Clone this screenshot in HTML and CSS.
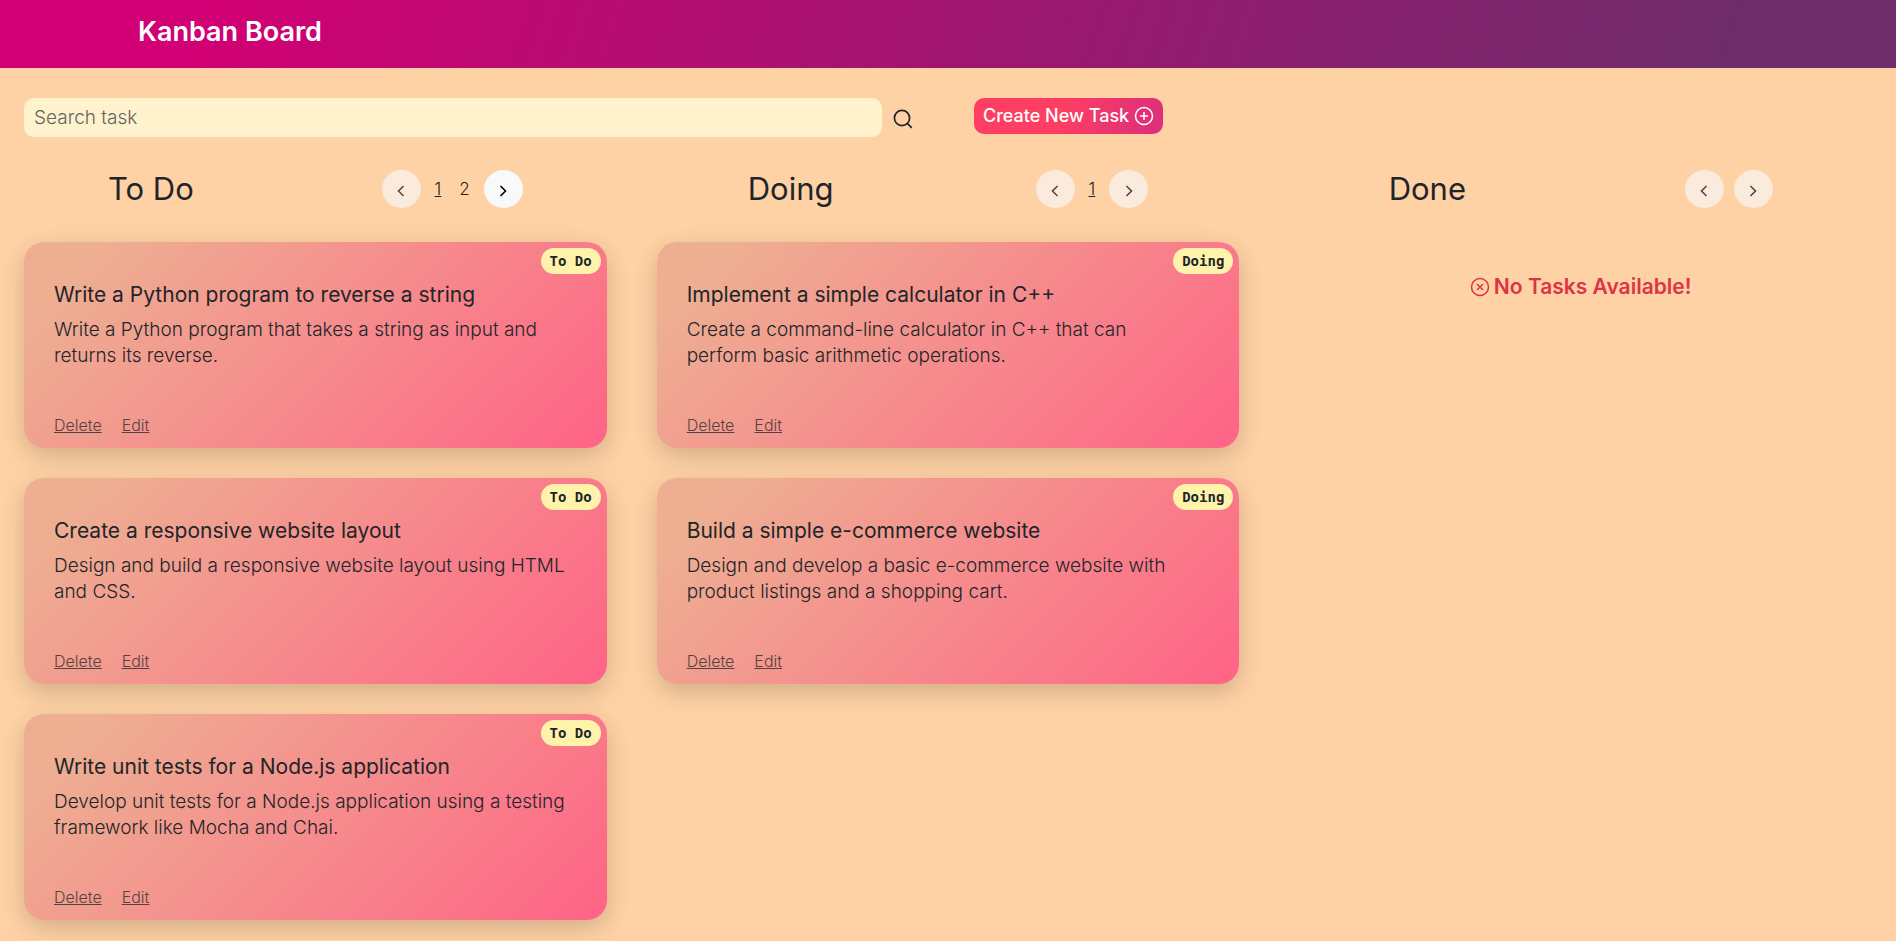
FILE: index.html
```html
<!DOCTYPE html>
<html lang="en">
<head>
<meta charset="utf-8">
<meta name="viewport" content="width=device-width, initial-scale=1">
<title>Kanban Board</title>
<link rel="stylesheet" href="styles.css">
</head>
<body>
<svg class="sprite" aria-hidden="true">
  <symbol id="left" viewBox="0 0 18 18"><path d="M11.500 4 6.500 9l5 5" fill="none" stroke="currentColor" stroke-width="1.600"/></symbol>
  <symbol id="right" viewBox="0 0 18 18"><path d="m6.500 4 5 5-5 5" fill="none" stroke="currentColor" stroke-width="1.600"/></symbol>
</svg>
<header class="navbar"><h1 class="brand">Kanban Board</h1></header>
<main>
  <div class="toolbar">
    <form class="search">
      <input class="search-input" type="text" placeholder="Search task" aria-label="Search task">
      <button class="search-button" type="button" aria-label="Search">
        <svg class="search-icon" viewBox="0 0 20 20" fill="none" stroke="currentColor" stroke-width="1.7"><circle cx="9" cy="9" r="7.600"/><path d="m14.300 14.300 4.500 4.500"/></svg>
      </button>
    </form>
    <div class="actions">
      <button class="create" type="button">Create New Task
        <svg class="create-icon" viewBox="0 0 20 20" fill="none" stroke="currentColor" stroke-width="1.5"><circle cx="10" cy="10" r="8.500"/><path d="M10 6v8M6 10h8"/></svg>
      </button>
    </div>
  </div>
  <div class="board">
    <section class="column">
      <div class="column-head">
        <h2 class="column-title">To Do</h2>
        <nav class="pager" aria-label="To Do pages">
          <button class="page-button" type="button" aria-label="Previous" disabled><svg class="chevron"><use href="#left"/></svg></button>
          <a class="page current" href="#">1</a>
          <a class="page" href="#">2</a>
          <button class="page-button" type="button" aria-label="Next"><svg class="chevron"><use href="#right"/></svg></button>
        </nav>
      </div>
      <article class="card">
        <span class="badge">To Do</span>
        <h3 class="card-title">Write a Python program to reverse a string</h3>
        <p class="card-text">Write a Python program that takes a string as input and<br>returns its reverse.</p>
        <div class="card-links"><a href="#">Delete</a><a href="#">Edit</a></div>
      </article>
      <article class="card">
        <span class="badge">To Do</span>
        <h3 class="card-title">Create a responsive website layout</h3>
        <p class="card-text">Design and build a responsive website layout using HTML<br>and CSS.</p>
        <div class="card-links"><a href="#">Delete</a><a href="#">Edit</a></div>
      </article>
      <article class="card">
        <span class="badge">To Do</span>
        <h3 class="card-title">Write unit tests for a Node.js application</h3>
        <p class="card-text">Develop unit tests for a Node.js application using a testing<br>framework like Mocha and Chai.</p>
        <div class="card-links"><a href="#">Delete</a><a href="#">Edit</a></div>
      </article>
    </section>
    <section class="column">
      <div class="column-head">
        <h2 class="column-title">Doing</h2>
        <nav class="pager" aria-label="Doing pages">
          <button class="page-button" type="button" aria-label="Previous" disabled><svg class="chevron"><use href="#left"/></svg></button>
          <a class="page current" href="#">1</a>
          <button class="page-button" type="button" aria-label="Next" disabled><svg class="chevron"><use href="#right"/></svg></button>
        </nav>
      </div>
      <article class="card">
        <span class="badge">Doing</span>
        <h3 class="card-title">Implement a simple calculator in C++</h3>
        <p class="card-text">Create a command-line calculator in C++ that can<br>perform basic arithmetic operations.</p>
        <div class="card-links"><a href="#">Delete</a><a href="#">Edit</a></div>
      </article>
      <article class="card">
        <span class="badge">Doing</span>
        <h3 class="card-title">Build a simple e-commerce website</h3>
        <p class="card-text">Design and develop a basic e-commerce website with<br>product listings and a shopping cart.</p>
        <div class="card-links"><a href="#">Delete</a><a href="#">Edit</a></div>
      </article>
    </section>
    <section class="column">
      <div class="column-head">
        <h2 class="column-title">Done</h2>
        <nav class="pager" aria-label="Done pages">
          <button class="page-button" type="button" aria-label="Previous" disabled><svg class="chevron"><use href="#left"/></svg></button>
          <button class="page-button" type="button" aria-label="Next" disabled><svg class="chevron"><use href="#right"/></svg></button>
        </nav>
      </div>
      <p class="empty">
        <svg class="empty-icon" viewBox="0 0 20 20" fill="none" stroke="currentColor" stroke-width="1.500"><circle cx="10" cy="10" r="8.500"/><path d="m7 7 6 6M13 7l-6 6"/></svg>
        No Tasks Available!
      </p>
    </section>
  </div>
</main>
</body>
</html>
```
FILE: styles.css
```css
* { box-sizing: border-box; }

body {
  margin: 0;
  background: #ffd2a5;
  color: #212529;
  font-family: Inter, "Open Sans", sans-serif;
  font-size: 19px;
  font-weight: 300;
  line-height: 26px;
}

h1, h2, h3, p { margin: 0; }
a { color: inherit; }
button, input { font: inherit; color: inherit; border: 0; }
.sprite { position: absolute; width: 0; height: 0; }

.navbar {
  height: 68px;
  padding: 16px 138px;
  background: linear-gradient(109.6deg, rgb(209, 0, 116) 11.2%, rgb(110, 44, 107) 91.1%);
  color: #fff;
}

.brand { font-size: 27px; font-weight: 600; line-height: 32px; }

.toolbar {
  display: grid;
  grid-template-columns: 1fr 1fr;
  padding-top: 30px;
}

.search {
  display: flex;
  align-items: center;
  gap: 10px;
  padding: 0 34px 0 24px;
}

.search-input {
  flex: 1;
  min-width: 0;
  height: 39px;
  padding: 0 10px;
  border-radius: 10px;
  background: #fff3cd;
}

.search-input::placeholder { color: #62655d; opacity: 1; }

.search-button {
  display: flex;
  padding: 3px 1px 0;
  background: none;
}

.search-icon { width: 20px; height: 20px; }

.actions { padding-left: 26px; }

.create {
  display: flex;
  align-items: center;
  gap: 5px;
  height: 36px;
  padding: 0 9px;
  border-radius: 10px;
  background: linear-gradient(109.6deg, #ff3e63 45%, #df3079 91.1%);
  color: #fff;
  font-size: 18px;
  font-weight: 500;
}

.create-icon { width: 20px; height: 20px; }

.board {
  display: grid;
  grid-template-columns: repeat(3, minmax(0, 1fr));
  gap: 50px;
  padding: 33px 24px 20px;
}

.column {
  display: flex;
  flex-direction: column;
  gap: 30px;
}

.column-head {
  display: flex;
  align-items: center;
  justify-content: space-around;
  gap: 20px;
  height: 38px;
  margin-bottom: 4px;
}

.column-title { font-size: 31px; font-weight: 400; line-height: 36px; }

.pager { display: flex; align-items: center; gap: 10px; }

.page-button {
  display: flex;
  align-items: center;
  justify-content: center;
  width: 39px;
  height: 38px;
  padding: 3px 0 0;
  border-radius: 50%;
  background: #f8f9fa;
  color: #000;
}

.page-button:disabled { opacity: 0.65; }
.chevron { width: 18px; height: 18px; }
.page { padding: 0 4px; font-size: 17px; text-decoration: none; }
.current { text-decoration: underline; }

.card {
  position: relative;
  display: flex;
  flex-direction: column;
  min-height: 206px;
  padding: 40px 30px 10px;
  border-radius: 20px;
  background: linear-gradient(135deg, #eeae92 11%, #ff6386 100%);
  box-shadow: 0 8px 24px rgba(0, 0, 0, 0.18);
}

.badge {
  position: absolute;
  top: 6px;
  right: 6px;
  padding: 0 9px;
  border-radius: 13px;
  background: #fff3ab;
  font-family: "DejaVu Sans Mono", monospace;
  font-size: 14px;
  font-weight: 700;
}

.card-title { margin-bottom: 9px; font-size: 21px; font-weight: 400; }

.card-links {
  display: flex;
  gap: 20px;
  margin-top: auto;
  font-size: 16px;
  opacity: 0.75;
}

.empty {
  display: flex;
  align-items: center;
  justify-content: center;
  gap: 4px;
  padding-top: 32px;
  color: #dc3545;
  font-size: 21px;
  font-weight: 600;
}

.empty-icon { width: 20px; height: 20px; }

@media (max-width: 900px) {
  .toolbar, .board { grid-template-columns: 1fr; gap: 20px; }
  .navbar { padding-left: 24px; padding-right: 24px; }
}
```
